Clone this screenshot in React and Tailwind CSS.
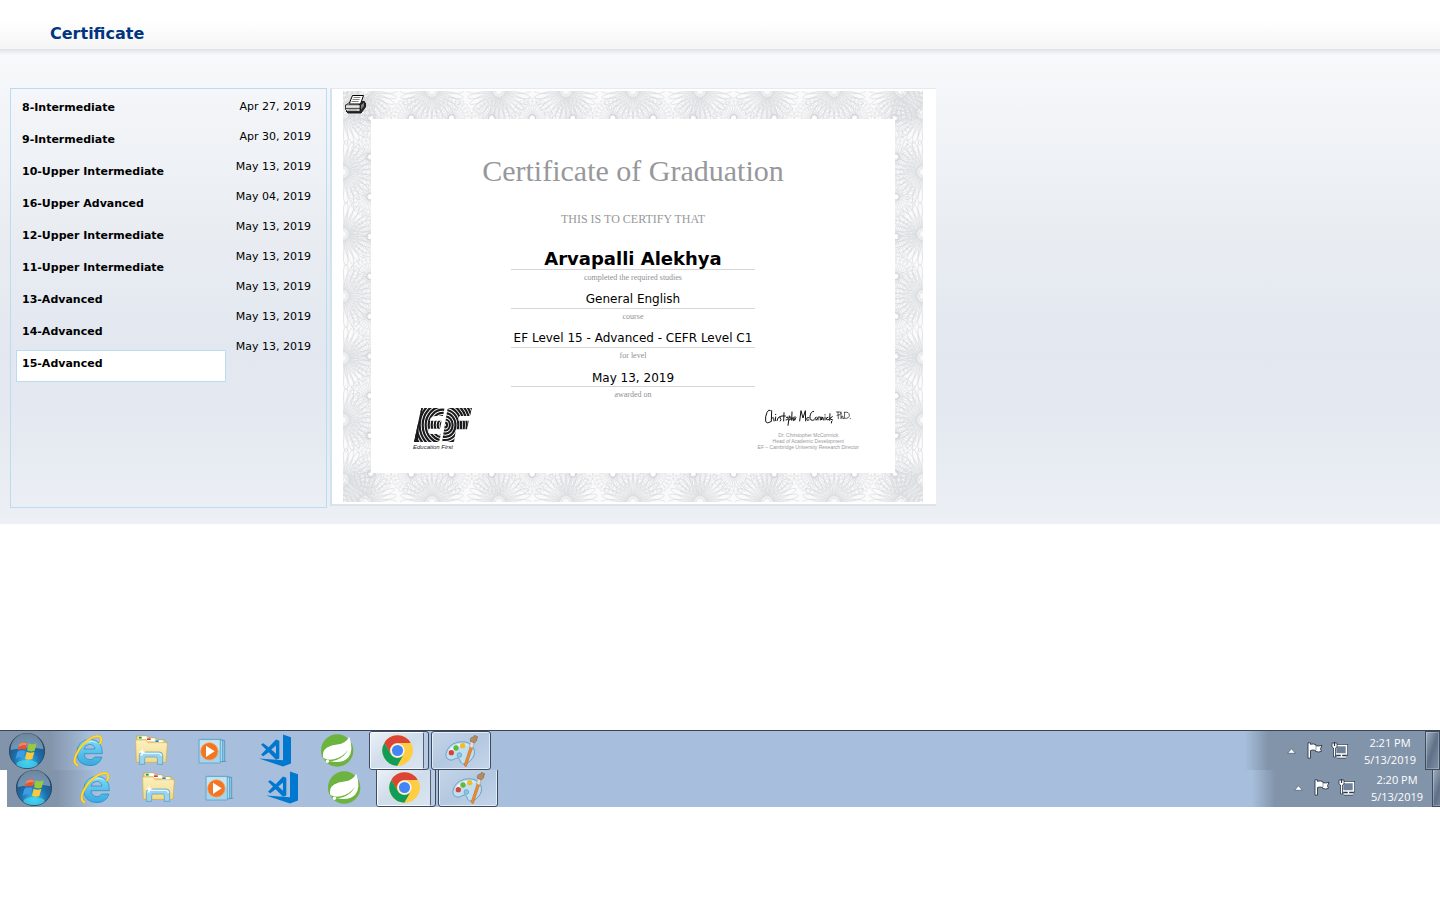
import React from "react";

const levels = [
  ["8-Intermediate", "Apr 27, 2019"],
  ["9-Intermediate", "Apr 30, 2019"],
  ["10-Upper Intermediate", "May 13, 2019"],
  ["16-Upper Advanced", "May 04, 2019"],
  ["12-Upper Intermediate", "May 13, 2019"],
  ["11-Upper Intermediate", "May 13, 2019"],
  ["13-Advanced", "May 13, 2019"],
  ["14-Advanced", "May 13, 2019"],
  ["15-Advanced", "May 13, 2019"],
];

const fields = [
  ["Arvapalli Alekhya", "completed the required studies", "text-[18px] leading-[21px] font-bold"],
  ["General English", "course", "text-[12px] leading-[24px]"],
  ["EF Level 15 - Advanced - CEFR Level C1", "for level", "text-[12px] leading-[24px]"],
  ["May 13, 2019", "awarded on", "text-[12px] leading-[26px]"],
];

const range = (n) => Array.from({ length: n }, (_, i) => i);

/* Guilloche border: large rosettes on the outer edge, small ones on the inner edge. */
function Guilloche() {
  const big = [];
  range(9).forEach((i) => {
    const x = 290 + (i - 4) * 67;
    big.push([x, 0], [x, 411]);
  });
  range(5).forEach((i) => {
    const y = 205 + (i - 2) * 62;
    big.push([0, y], [580, y]);
  });
  [22, 389].forEach((y) => big.push([0, y], [580, y]));
  const small = [];
  range(14).forEach((i) => {
    const x = 28 + i * 40.3;
    small.push([x, 27], [x, 383]);
  });
  range(8).forEach((i) => {
    const y = 66 + i * 39.8;
    small.push([27, y], [553, y]);
  });
  return (
    <svg className="absolute inset-0 h-full w-full" viewBox="0 0 580 411" aria-hidden="true">
      <defs>
        <g id="rosette-big" fill="none" stroke="#d3d5d8" strokeWidth="0.5">
          {range(30).map((i) => (
            <ellipse key={i} cx="19" cy="0" rx="13" ry="2.8" transform={`rotate(${i * 12})`} />
          ))}
          {range(30).map((i) => (
            <path key={i} d="M3 0H23" transform={`rotate(${i * 12 + 6})`} strokeWidth="0.35" />
          ))}
        </g>
        <g id="rosette-small" fill="none" stroke="#d6d8db" strokeWidth="0.35">
          {range(26).map((i) => (
            <ellipse key={i} cx="12" cy="0" rx="9" ry="2.4" transform={`rotate(${i * 13.846})`} />
          ))}
          <circle r="13" />
          <circle r="17" />
          <circle r="20" strokeDasharray="2 1" />
          <circle r="3.4" stroke="#d0d2d6" strokeWidth="1" />
        </g>
      </defs>
      <rect width="580" height="411" fill="#fafafb" />
      {small.map(([x, y], i) => (
        <use key={i} href="#rosette-small" x={x} y={y} />
      ))}
      {big.map(([x, y], i) => (
        <use key={i} href="#rosette-big" x={x} y={y} />
      ))}
      <rect x="28" y="28" width="524" height="354" fill="#fff" />
      {small.map(([x, y], i) => (
        <circle key={i} cx={x} cy={y} r="1.6" fill="#fff" />
      ))}
    </svg>
  );
}

function PrinterIcon() {
  return (
    <svg width="21" height="19" viewBox="0 0 21 19" aria-hidden="true">
      <path d="M15 9.500 18 6l2.500 2v4L16 18H3l-2-2z" fill="#333" stroke="#000" strokeWidth=".8" />
      <path d="M4 9 7.500 .5h11L15.500 9z" fill="#fff" stroke="#000" strokeWidth="1" />
      <path d="M8.500 2.500h7M7.500 4.500h7M6.500 6.500h7" stroke="#777" strokeWidth=".9" />
      <path d="M.5 10.500 3.500 8h2M.5 10h14.500v6.500H2.500l-2-2z" fill="#cfd1cf" stroke="#222" strokeWidth=".9" />
      <path d="M1 11h13.500" stroke="#fff" />
      <path d="M1 13.500h14" stroke="#333" strokeWidth=".8" />
      <path d="M3 15h9" stroke="#8f958f" strokeWidth=".8" />
      <path d="M15.500 10 19.500 6.500v4.500l-4 5z" fill="#7d7f7d" stroke="#111" strokeWidth=".8" />
    </svg>
  );
}

function EfLogo() {
  return (
    <svg width="58" height="34" viewBox="252 84 174 102" aria-label="EF" role="img">
      <defs>
        <clipPath id="ef-e">
          <path d="M274 84h70l-5 24h-22q-15 0-18 14h36l-5 24h-35q-2 16 10 16h28l-6 24h-75z" />
        </clipPath>
        <clipPath id="ef-f">
          <path d="M353 84h73l-6 24h-32l-3 14h32l-6 26h-33l-6 38h-36z" />
        </clipPath>
      </defs>
      <g clipPath="url(#ef-e)" fill="none" stroke="#1b1b1d" strokeWidth="6.500">
        {range(11).map((i) => (
          <ellipse key={i} cx="338" cy="135" rx={6 + i * 9} ry={8 + i * 9.5} />
        ))}
        <path d="M272 84q-15 45-15 102" strokeWidth="14" />
      </g>
      <g clipPath="url(#ef-f)" fill="none" stroke="#1b1b1d" strokeWidth="6.500">
        {range(11).map((i) => (
          <ellipse key={i} cx="346" cy="135" rx={5 + i * 8.5} ry={7 + i * 9.5} />
        ))}
      </g>
    </svg>
  );
}

function Signature() {
  return (
    <svg width="87" height="18" viewBox="72 86 261 54" role="img" aria-label="Christopher McCormick, Ph.D." fill="none" stroke="#111" strokeWidth="3" strokeLinecap="round" strokeLinejoin="round">
      <path d="M91 93q-5-4-10 6-6 14-4 26 2 10 15 2M95 94l-1 32M95 118q5-8 6-1l1 8M107 113l-1 11M107 105v1M111 124q1-10 8-12M125 110q-7 0-5 6 6 4 1 9M132 100l-1 25M127 110h9M139 114q6-4 5 3-1 6-6 5M148 110l-4 28M148 113q8-2 4 7l-5 2M156 98l-1 25q1-9 5-9v10M165 112l-1 11q2-8 4-8" />
      <path d="M179 125l4-31 6 22 7-22 1 31M207 115q-7-3-7 4t7 3M221 96q-9 0-11 15-1 16 12 11M228 114q-5 1-3 6t6 0 0-6M234 122v-8q3-3 5-1M241 122v-8q3-3 4 0v8q0-11 4-8l1 8M255 113v9M255 106v1M264 114q-6 0-5 5t7 2M270 103l-1 20M277 112l-8 6 9 4M275 126l-1 5" />
      <path d="M289 98h11q8 2 0 8l-9 2M294 98l1 20M303 98v20q1-9 5-8l1 8M311 117v1M314 99l-1 18q15 1 15-9 0-12-15-9M331 117v1" strokeWidth="2" />
    </svg>
  );
}

function Orb() {
  return (
    <svg width="36" height="36" viewBox="27 21 108 108" aria-hidden="true">
      <circle cx="81" cy="75" r="53" fill="url(#orb-fill)" stroke="#1c3550" strokeWidth="2" />
      <ellipse cx="81" cy="114" rx="32" ry="12" fill="#4ce0f5" opacity=".6" />
      <path d="M32 72a49 49 0 0 1 98-2q-45-12-98 2z" fill="#dce8f2" opacity=".4" />
      <path d="M58 53q13-9 24-3l-5 21q-11-5-24 2z" fill="#e9552b" />
      <path d="M86 52q10 6 24 0l-6 22q-12 5-23-1z" fill="#9bc93c" />
      <path d="M52 77q12-7 24-2l-6 21q-11-5-23 2z" fill="#3f9be5" />
      <path d="M80 77q11 6 23 1l-6 21q-11 5-22-1z" fill="#fdc938" />
      <path d="M58 54q12-7 23-3l-2 7q-12-3-23 5z" fill="#fff" opacity=".3" />
    </svg>
  );
}

function IeIcon() {
  return (
    <svg width="32" height="32" viewBox="220 25 96 96" aria-hidden="true">
      <path fillRule="evenodd" d="M308 81h-55q1 17 18 18 10 0 14-8h22q-8 26-36 26-38-1-40-38 2-40 41-41 37 2 36 43zM253 67h33q-2-13-16-14-14 1-17 14z" fill="url(#ie-fill)" stroke="#2787bd" strokeWidth="2" />
      <path d="M238 70q6-21 28-28 20-3 29 10-14-9-29-4-16 5-28 22z" fill="#d3f6ff" opacity=".7" />
      <path d="M233 116q-15-9-2-35 16-32 48-49 22-8 25 2 2 8-3 16" fill="none" stroke="#e0a800" strokeWidth="7" strokeLinecap="round" />
      <path d="M233 116q-15-9-2-35 16-32 48-49 22-8 25 2 2 8-3 16" fill="none" stroke="#ffdc3a" strokeWidth="5" strokeLinecap="round" />
    </svg>
  );
}

function FolderIcon() {
  return (
    <svg width="33" height="31" viewBox="405 34 99 93" aria-hidden="true">
      <path d="M409 40q0-3 3-3h32l4 6h20l4 5h20l3 6h3q3 0 3 4l-3 54q0 4-4 4h-81q-4 0-4-4z" fill="#efd68a" stroke="#c39f4b" strokeWidth="2" />
      <path d="M416 38h24v8h-24zM440 44h24v8h-24zM464 50h24v8h-24z" fill="#fff" />
      <path d="M417 39h8v6h-8z" fill="#19a52c" />
      <path d="M441 44h11v5h-11z" fill="#d8372d" />
      <path d="M466 50h10v5h-10z" fill="#1d83d3" />
      <path d="M407 49h31l6 8h54q4 0 4 4l-4 51q0 4-4 4h-81q-4 0-4-4z" fill="url(#folder-fill)" stroke="#d2b260" strokeWidth="2" />
      <path d="M418 122V96q0-11 10-11h50q10 0 10 11v26h-16v-17q0-5-5-5h-28q-5 0-5 5v17z" fill="#9bd4ef" stroke="#4c98c6" strokeWidth="2" />
      <path d="M422 96q1-7 8-7h46q8 0 8 8" fill="none" stroke="#e3f7ff" strokeWidth="4" />
      <path d="M427 73l2 9 9 3-9 3-2 10-3-10-9-3 9-3z" fill="#fff" />
    </svg>
  );
}

function MediaIcon() {
  return (
    <svg width="30" height="26" viewBox="595 38 90 78" aria-hidden="true">
      <path d="M650 110h34l-12-7z" fill="#7187a5" opacity=".5" />
      <path d="M612 43l63 2v63l-63 3z" fill="#92c9e7" stroke="#3c89b4" strokeWidth="2" />
      <path d="M606 42l63 2v65l-63 3z" fill="#a8d7ee" stroke="#3c89b4" strokeWidth="2" />
      <path d="M598 42h64v71h-64z" fill="#a5d5ec" stroke="#4b98bf" strokeWidth="2" />
      <path d="M601 45h58v30q-28 8-58 4z" fill="#d9f0fa" opacity=".6" />
      <circle cx="629" cy="78" r="26" fill="#f37421" stroke="#ff9c4c" strokeWidth="2" />
      <path d="M619 61v34l26-17z" fill="#fff" />
    </svg>
  );
}

function CodeIcon() {
  return (
    <svg width="32" height="33" viewBox="27 26 96 98" aria-hidden="true">
      <path d="M99 27l24 8v79l-24 9-72-24 72 5z" fill="#0078d0" />
      <path fillRule="evenodd" d="M33 57l7-4 16 12 22-23 10 4v53l-10 4-22-23-16 12-7-4 15-16zm45 3L64 72l14 13z" fill="#0078d0" />
    </svg>
  );
}

function SpringIcon() {
  return (
    <svg width="33" height="33" viewBox="213 26 98 98" aria-hidden="true">
      <circle cx="261" cy="75" r="48" fill="#6db33f" />
      <path d="M297 34q14 40-3 62-18 19-55 11-14-1-19-10-5-20 11-31 13-8 30-9 26-3 36-23z" fill="#fff" />
      <path d="M221 97q12 8 30 4 28-6 42-28-10 22-34 30-18 6-32 5z" fill="#6db33f" />
      <circle cx="232" cy="107" r="5" fill="#fff" />
    </svg>
  );
}

function ChromeIcon() {
  return (
    <svg width="31" height="31" viewBox="-46 -46 92 92" aria-hidden="true">
      <circle r="45" fill="#fc4" />
      <path d="M-39-22.500A45 45 0 0 1 39-22.500H0A22.500 22.500 0 0 0-19.500 11.250z" fill="#dc4437" />
      <path d="M-39-22.500A45 45 0 0 0 0 45L19.500 11.250A22.500 22.500 0 0 1-19.500 11.250z" fill="#0f9d58" />
      <path d="M0-22.500H39A45 45 0 0 1 0 45L19.500 11.250A22.500 22.500 0 0 0 0-22.500z" fill="#ffcd41" />
      <circle r="21" fill="#f4f4f4" />
      <circle r="16.500" fill="#4285f4" />
    </svg>
  );
}

function PaintIcon() {
  return (
    <svg width="33" height="32" viewBox="583 27 99 96" aria-hidden="true">
      <path d="M586 83q6-27 34-34 27-6 43 9 15 18 4 36-13 21-31 20-8-3-9-14-3-7-12-3-14 10-25 1-6-7-4-15z" fill="#c0dff0" stroke="#6b9fc4" strokeWidth="3" />
      <path d="M591 82q7-23 31-28 20-4 33 5-24-2-39 10-14 12-25 13z" fill="#eef9ff" opacity=".8" />
      <circle cx="602" cy="80" r="8" fill="#d84334" />
      <circle cx="616" cy="66" r="8" fill="#62b83c" />
      <circle cx="636" cy="59" r="8" fill="#f1bd26" />
      <circle cx="626" cy="87" r="7" fill="#8cc7eb" stroke="#5b97c2" strokeWidth="2" />
      <path d="M659 60l7 5-19 56q-6 1-6-5z" fill="#ef8d30" stroke="#b85c17" strokeWidth="1.500" />
      <path d="M660 45l10 5-4 17-9-4z" fill="#e5e1dc" stroke="#8a7460" strokeWidth="1" />
      <path d="M660 46q-4-11 7-13 6 0 5-6 3 5 6 4l4 2-3 4q1 9-8 14z" fill="#b38b61" stroke="#7d5a3b" strokeWidth="1.500" />
    </svg>
  );
}

function TrayIcons() {
  return (
    <div className="flex items-center gap-[8px]">
      <button aria-label="Show hidden icons" className="mr-[3px]">
        <svg width="9" height="6" viewBox="0 0 9 6" aria-hidden="true">
          <path d="M.5 5.300 4.500 .7 8.500 5.300z" fill="#fff" stroke="#4d5c70" strokeWidth=".7" />
        </svg>
      </button>
      <button aria-label="Action Center">
        <svg width="16" height="17" viewBox="0 0 16 17" aria-hidden="true">
          <path d="M1 .8h2.500v1.500q3-1 5.500.5v1q3 .5 6-.5l-1.500 3.500 1 2.500q-3 1.500-6 0V8.500Q6 7.500 3.500 8.500v7.700H1z" fill="#fff" stroke="#2b3749" strokeWidth=".9" />
          <path d="M9 3.500V8" stroke="#67758a" strokeWidth=".7" />
        </svg>
      </button>
      <button aria-label="Network">
        <svg width="17" height="17" viewBox="0 0 17 17" aria-hidden="true">
          <path d="M4.500 3.500h11v8.500h-11zM6 15h9M10.500 12v3" fill="none" stroke="#2b3749" strokeWidth="3" />
          <path d="M4.500 3.500h11v8.500h-11z" fill="#6f8299" stroke="#fff" strokeWidth="1.600" />
          <path d="M6 15h9M10.500 12v3" stroke="#fff" strokeWidth="1.400" />
          <path d="M1 1v4l1.500 1v9h2V6L6 5V1z" fill="#fff" stroke="#2b3749" strokeWidth=".8" />
          <path d="M3.500 0v4" stroke="#2b3749" strokeWidth="1.200" />
        </svg>
      </button>
    </div>
  );
}

const apps = [
  ["Internet Explorer", IeIcon],
  ["Windows Explorer", FolderIcon],
  ["Media Player", MediaIcon],
  ["Visual Studio Code", CodeIcon],
  ["Spring Tool Suite", SpringIcon],
];

function Taskbar({ time }) {
  return (
    <nav aria-label={"Taskbar " + time} className="flex h-10 w-screen shrink-0 justify-between border-t border-[#39435a] bg-[linear-gradient(90deg,#8294aa_0,#8294aa_50px,#a7bfdc_90px,#a7bfdc_calc(100%-195px),#8294aa_calc(100%-172px),#8294aa_100%)]">
      <div className="flex items-center">
        <button aria-label="Start" className="flex w-[58px] justify-start pl-[9px]">
          <Orb />
        </button>
        {apps.map(([name, Icon]) => (
          <button key={name} aria-label={name} className="flex w-[62px] justify-center">
            <Icon />
          </button>
        ))}
        <button aria-label="Chrome" className="mr-[2px] ml-px flex h-full w-[60px] rounded-[3px] border border-[#3c4a62] bg-[#b9cbe1]">
          <span className="flex h-full w-[54px] items-center justify-center rounded-[2px] border border-r-[#53627c] border-white/80 bg-gradient-to-br from-[#eaf0f7] via-[#cfdcea] to-[#dbe5f1]">
            <ChromeIcon />
          </span>
        </button>
        <button aria-label="Paint" className="flex h-full w-[60px] items-center justify-center rounded-[3px] border border-[#3c4a62] bg-gradient-to-br from-[#c5d5e8] via-[#b3c8e1] to-[#c3d5ea] shadow-[inset_0_0_0_1px_rgba(255,255,255,0.6)]">
          <PaintIcon />
        </button>
      </div>
      <div className="flex items-center">
        <TrayIcons />
        <time className="ml-[7px] w-[70px] text-center font-['Open_Sans',sans-serif] text-[11px] leading-[17px] text-white">
          {time}
          <br />
          5/13/2019
        </time>
        <button aria-label="Show desktop" className="h-full w-[15px] border border-[#3f4c60] bg-gradient-to-br from-[#a3b0c1] via-[#5f7087] to-[#8192a8] shadow-[inset_0_0_0_1px_rgba(255,255,255,0.25)]" />
      </div>
    </nav>
  );
}

export default function App() {
  return (
    <div className="overflow-x-hidden bg-white font-['DejaVu_Sans',Verdana,sans-serif] text-black">
      <svg width="0" height="0" className="absolute" aria-hidden="true">
        <defs>
          <radialGradient id="orb-fill" cx=".5" cy=".8" r=".75">
            <stop offset="0" stopColor="#38c4ea" />
            <stop offset=".5" stopColor="#1d6eac" />
            <stop offset="1" stopColor="#294766" />
          </radialGradient>
          <linearGradient id="ie-fill" x1="0" y1="0" x2="0" y2="1">
            <stop offset="0" stopColor="#7ed8f7" />
            <stop offset="1" stopColor="#37a9e1" />
          </linearGradient>
          <linearGradient id="folder-fill" x1="0" y1="0" x2="0" y2="1">
            <stop offset="0" stopColor="#fcf0bf" />
            <stop offset="1" stopColor="#f2da87" />
          </linearGradient>
        </defs>
      </svg>

      <header className="flex h-[50px] items-end border-b border-[#dfe2e6] bg-gradient-to-b from-white from-40% to-[#f5f5f5] pb-[4px] pl-[50px]">
        <h1 className="text-[16px] leading-[22px] font-bold text-[#003580]">Certificate</h1>
      </header>

      <main className="flex items-start gap-[3px] bg-[linear-gradient(180deg,#e4e7ea_0,#f8f9fa_5px,#f4f6f9_40px,#e9edf2_180px,#e2e7f0_310px,#e6ebf2_400px,#edf0f5_474px)] px-[10px] pt-[38px] pb-4">
        <section aria-label="Levels" className="flex min-h-[420px] w-[317px] items-start justify-between border border-[#b9dcf0] pt-[5px] pr-[15px] pl-[5px] text-[11px] leading-6">
          <ul className="w-[210px]">
            {levels.map(([name]) => (
              <li key={name}>
                <button
                  className={
                    "block h-8 w-full border pb-[4px] pl-[5px] text-left font-bold " +
                    (name === "15-Advanced" ? "border-[#b9dcf0] bg-white" : "border-transparent")
                  }
                >
                  {name}
                </button>
              </li>
            ))}
          </ul>
          <ul className="pt-px text-right">
            {levels.map(([name, date]) => (
              <li key={name} className="h-[30px]">{date}</li>
            ))}
          </ul>
        </section>

        <article className="w-[606px] border-t border-b-2 border-l-2 border-t-[#e6eaed] border-b-[#dde3e9] border-l-[#cfe4ec] bg-white pt-[2px] pr-[13px] pb-[2px] pl-[11px]">
          <div className="relative">
            <Guilloche />
            <div className="relative flex min-h-[411px] flex-col items-center pt-[62px] text-center">
              <h2 className="font-['Liberation_Serif',serif] text-[30px] leading-9 text-[#97989b]">Certificate of Graduation</h2>
              <p className="mt-[22px] font-['Liberation_Serif',serif] text-[12px] leading-4 text-[#97989b]">THIS IS TO CERTIFY THAT</p>
              <dl className="mt-[21px] flex w-[244px] flex-col">
                {fields.map(([value, label, size]) => (
                  <div key={label} className="flex flex-col-reverse">
                    <dt className="h-[17px] font-['Liberation_Serif',serif] text-[8px] leading-4 text-[#8f9093]">{label}</dt>
                    <dd className={"h-[22px] border-b border-[#d6d6d8] whitespace-nowrap " + size}>{value}</dd>
                  </div>
                ))}
              </dl>
              <div className="mt-[4px] flex w-full justify-between pr-[64px] pl-[70px] font-['Liberation_Sans',sans-serif]">
                <div className="text-left">
                  <div className="pl-px"><EfLogo /></div>
                  <p className="text-[6px] leading-[10px] text-[#222] italic">Education First</p>
                </div>
                <div className="flex flex-col items-center text-[5px] leading-[6px] text-[#99999c]">
                  <div className="mb-[6px] self-start pl-[6px]"><Signature /></div>
                  <p>Dr. Christopher McCormick</p>
                  <p>Head of Academic Development</p>
                  <p>EF – Cambridge University Research Director</p>
                </div>
              </div>
            </div>
            <button aria-label="Print certificate" className="absolute top-[4px] left-[2px]">
              <PrinterIcon />
            </button>
          </div>
        </article>
      </main>

      <footer className="mt-[206px]">
        <Taskbar time="2:21 PM" />
        <div className="ml-[7px] flex h-[37px] items-end overflow-hidden">
          <Taskbar time="2:20 PM" />
        </div>
      </footer>
    </div>
  );
}
